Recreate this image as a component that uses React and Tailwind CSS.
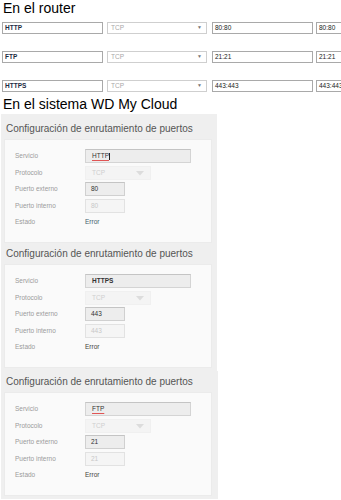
import { Fragment } from 'react';

const routerRows = [
  { service: 'HTTP', ext: '80:80', int: '80:80' },
  { service: 'FTP', ext: '21:21', int: '21:21' },
  { service: 'HTTPS', ext: '443:443', int: '443:443' },
];

const panels = [
  { service: 'HTTP', port: '80', spell: true, cursor: true, top: 'pt-[10px]', errorColor: 'text-[#3f5f6f]', wide: false },
  { service: 'HTTPS', port: '443', spell: false, cursor: false, top: 'pt-[3px]', errorColor: 'text-[#444]', wide: false },
  { service: 'FTP', port: '21', spell: true, cursor: false, top: 'pt-[6px]', errorColor: 'text-[#444]', wide: true },
];

function RouterRow({ row }) {
  return (
    <div className="flex h-[12px] w-[341px] items-stretch overflow-hidden">
      <div className="ml-[2px] flex w-[101px] shrink-0 items-center border border-[#a9a9a9] bg-white pl-[2px] text-[6.5px] font-bold text-[#1d2d44]">
        {row.service}
      </div>
      <div className="ml-[4px] flex w-[100px] shrink-0 items-center justify-between border border-[#cfcfcf] bg-white pl-[3px] pr-[4px] text-[6.5px] text-[#a8a8a8]">
        <span>TCP</span>
        <span className="text-[5px] text-[#777]">▼</span>
      </div>
      <div className="ml-[5px] flex w-[101px] shrink-0 items-center border border-[#a9a9a9] bg-white pl-[2px] text-[6.5px] text-[#222]">
        {row.ext}
      </div>
      <div className="ml-[3px] flex w-[40px] shrink-0 items-center border border-[#a9a9a9] bg-white pl-[2px] text-[6.5px] text-[#222]">
        {row.int}
      </div>
    </div>
  );
}

function Row({ label, children }) {
  return (
    <div className="flex h-[14px] items-center">
      <div className="w-[70px] shrink-0 text-[6.5px] text-[#9a9a9a]">{label}</div>
      {children}
    </div>
  );
}

function Panel({ p }) {
  return (
    <div className={`${p.wide ? 'w-[217px]' : 'w-[216px]'} ml-[1px] bg-[#efefef] pb-[3px] ${p.top}`}>
      <h3 className="ml-[5px] text-[10px] leading-[10px] text-[#555]">Configuración de enrutamiento de puertos</h3>
      <div className="ml-[3px] mt-[5px] h-[104px] w-[208px] border border-[#ebebeb] bg-[#fafafa] pl-[10px] pt-[9px]">
        <div className="flex flex-col gap-[2.5px]">
          <Row label="Servicio">
            <div className="flex h-[14px] w-[106px] items-center border border-[#d4d4d4] border-t-[#c4c4c4] bg-[#ededed] pl-[6px] text-[6.5px] text-[#333]">
              <span className={p.spell ? 'underline decoration-[#e05555] underline-offset-[1.5px]' : 'font-bold'}>{p.service}</span>
              {p.cursor && <span className="ml-[0.5px] h-[7px] w-[0.75px] bg-[#222]" />}
            </div>
          </Row>
          <Row label="Protocolo">
            <div className="flex h-[14px] w-[66px] items-center justify-between border border-[#f0f0f0] bg-[#f4f4f4] pl-[6px] pr-[6px] text-[6.5px] text-[#cfcfcf]">
              <span>TCP</span>
              <svg width="8" height="5" viewBox="0 0 8 5" className="mt-[2px]">
                <path d="M0 0 L8 0 L4 4.5 Z" fill="#dcdcdc" />
              </svg>
            </div>
          </Row>
          <Row label="Puerto externo">
            <div className="flex h-[14px] w-[40px] items-center border border-[#d0d0d0] border-t-[#c4c4c4] bg-[#ededed] pl-[5px] text-[6.5px] text-[#333]">
              {p.port}
            </div>
          </Row>
          <Row label="Puerto interno">
            <div className="flex h-[14px] w-[40px] items-center border border-[#e2e2e2] bg-[#f5f5f5] pl-[5px] text-[6.5px] text-[#c8c8c8]">
              {p.port}
            </div>
          </Row>
          <Row label="Estado">
            <span className={`text-[6.5px] ${p.errorColor}`}>Error</span>
          </Row>
        </div>
      </div>
    </div>
  );
}

export default function App() {
  return (
    <div className="h-[500px] w-[341px] overflow-hidden bg-white font-['Liberation_Sans',Arial,sans-serif]">
      <h1 className="ml-[3px] h-[22px] pt-[0px] text-[14px] leading-[16px] text-black">En el router</h1>
      <div className="flex flex-col gap-[17px]">
        {routerRows.map(r => (
          <RouterRow key={r.service} row={r} />
        ))}
      </div>
      <h2 className="ml-[3px] mt-[4px] h-[18px] text-[14px] leading-[16px] text-black">En el sistema WD My Cloud</h2>
      {panels.map(p => (
        <Fragment key={p.service}>
          <Panel p={p} />
        </Fragment>
      ))}
    </div>
  );
}
